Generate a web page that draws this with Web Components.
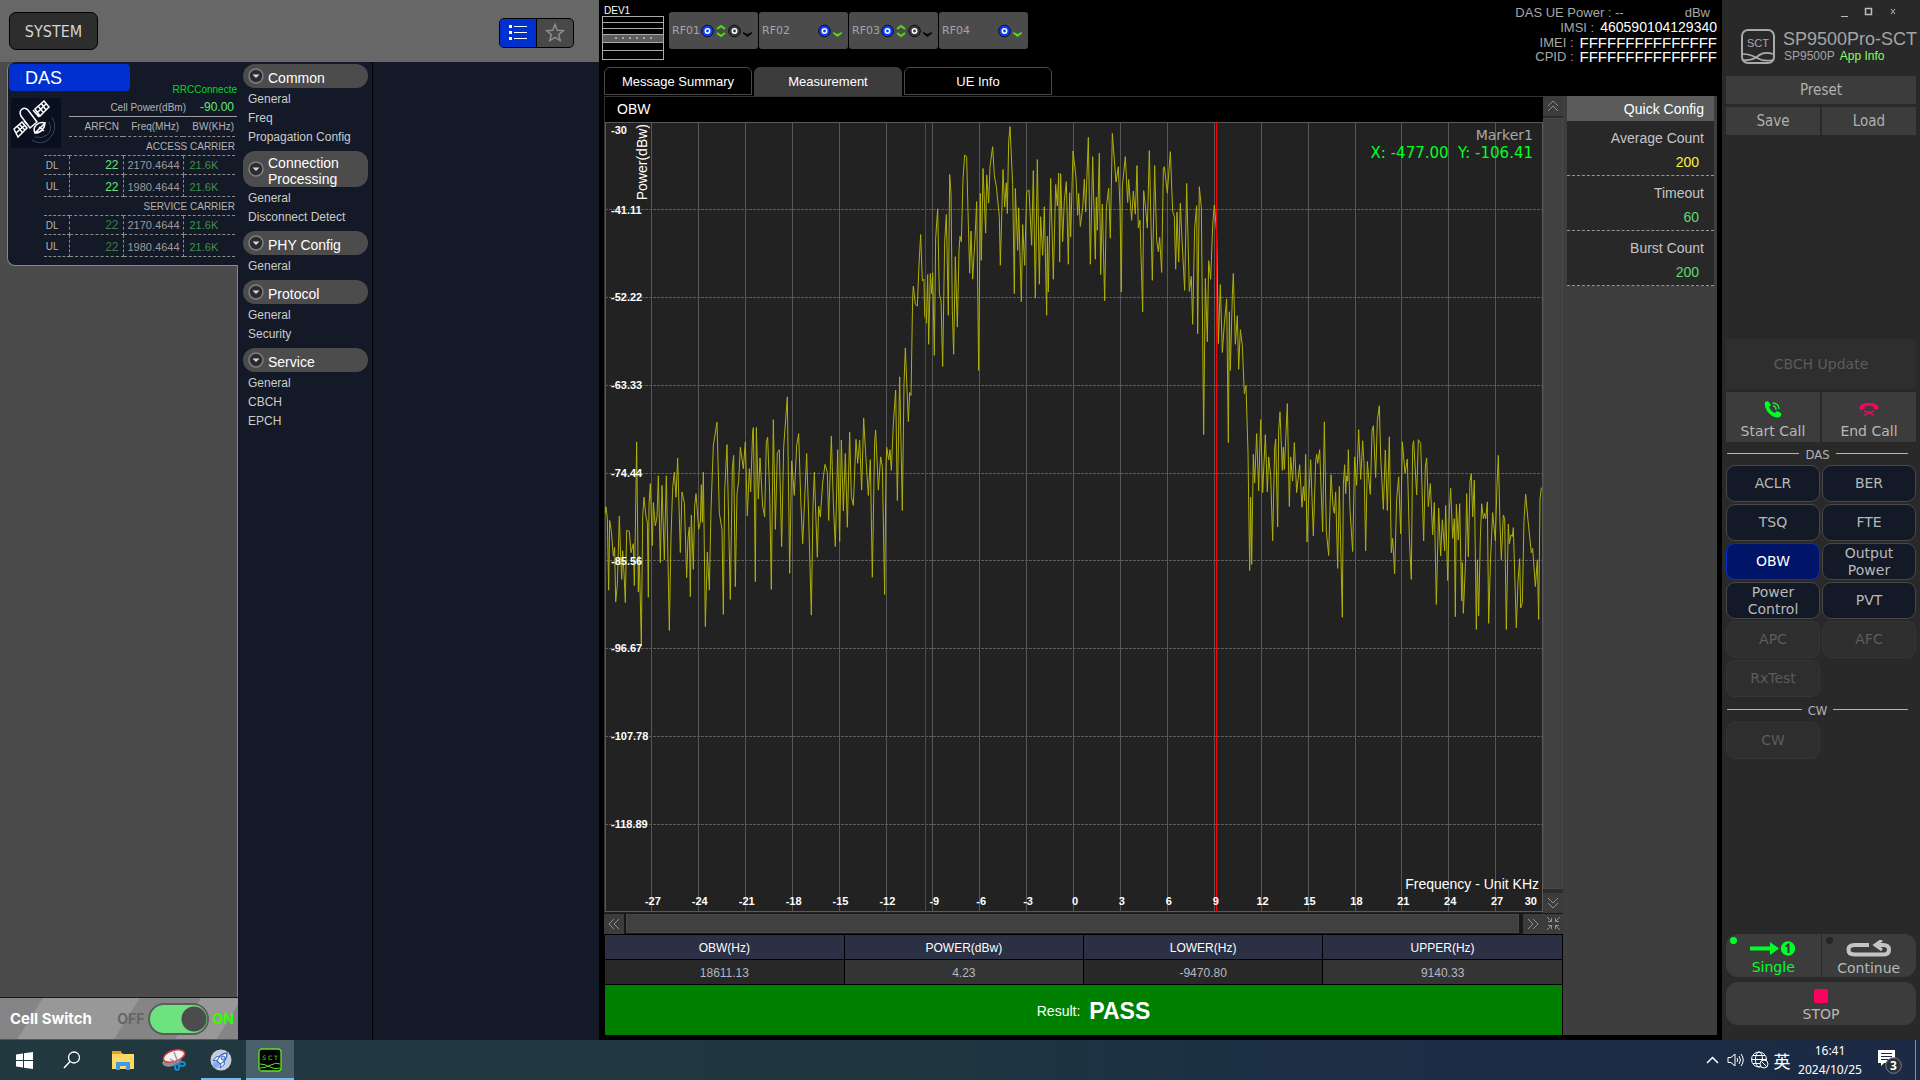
<!DOCTYPE html>
<html lang="en">
<head>
<meta charset="utf-8">
<title>SP9500Pro-SCT</title>
<style>
html,body{margin:0;height:100%;background:#000}
body{font-family:"Liberation Sans",Arial,sans-serif;font-size:14px;color:#ccc;--tahoma:"DejaVu Sans Condensed","DejaVu Sans",sans-serif;--verdana:"DejaVu Sans",sans-serif;--navy:#131926}
</style>
</head>
<body>
<sct-app></sct-app>
<script>
const define = (name, html, setup) => {
  const template = document.createElement('template');
  template.innerHTML = '<style>*{box-sizing:border-box}button,input{font:inherit;color:inherit;background:none;border:0;padding:0;margin:0}a{color:inherit;text-decoration:none}svg{display:block}</style>' + html;
  customElements.define(name, class extends HTMLElement {
    constructor() {
      super();
      this.attachShadow({ mode: 'open' }).append(template.content.cloneNode(true));
    }
    connectedCallback() { if (setup) setup(this, this.shadowRoot); }
  });
};

/* ---------- left side ---------- */
define('view-bar', `
<style>
:host{display:flex;align-items:center;justify-content:space-between;height:62px;padding:4px 25px 0 9px;background:#676767;flex:none}
.system{width:89px;height:38px;margin-bottom:4px;border:1px solid #000;border-radius:7px;background:#2d2d2d;color:#d4d4d4;font:16px var(--tahoma)}
.modes{display:flex;height:30px;width:75px;border:1px solid #000;border-radius:5px;overflow:hidden;background:#484848}
.modes button{flex:1;display:grid;place-items:center}
.modes button:first-child{background:#0030d0;border-right:1px solid #000}
</style>
<button class="system">SYSTEM</button>
<div class="modes">
<button aria-label="List view"><svg width="18" height="18" viewBox="0 0 18 18"><path d="M0 1h3v3H0zM0 7h3v3H0zM0 13h3v3H0zM5 2h13v1H5zM5 8h13v1H5zM5 14h13v1H5z" fill="#fff"/></svg></button>
<button aria-label="Favourites"><svg width="20" height="20" viewBox="0 0 20 20"><path d="M10 1.5l2.3 5.7 6.1.5-4.7 3.9 1.500 6-5.200-3.300-5.200 3.300 1.500-6L1.600 7.700l6.100-.5z" fill="none" stroke="#8c8c8c" stroke-width="1.500"/></svg></button>
</div>`);

define('cell-card', `
<style>
:host{display:block;margin-left:7px;background:var(--navy);border-left:1px solid #888;border-bottom:1px solid #888;border-radius:8px 0 0 8px;height:204px;font-size:10px;color:#b4b4b4;padding:2px 1px 0 0}
.top{display:flex;justify-content:space-between;height:52px}
.left{display:flex;flex-direction:column;width:122px}
h2{margin:0 0 0 1px;width:121px;height:27px;line-height:28px;padding-left:16px;border-radius:4px;background:#0030d0;color:#fff;font-size:18px;font-weight:400}
.state{margin-top:19px;line-height:14px;color:#00dc1e;white-space:nowrap}
.body{display:flex;flex-direction:column;align-items:flex-end;position:relative}
.pic{position:absolute;left:3px;top:-18px;width:50px;height:50px;background:#081020}
.power{display:flex;justify-content:flex-end;gap:14px;align-items:center;height:19px;margin-top:-18px;width:168px;padding-right:3px;border-bottom:1px solid #a0a0a0}
.power b{font-weight:400;font-size:12px;color:#66e87a}
table{border-collapse:collapse;table-layout:fixed;width:191px;margin-right:2px}
td,th{padding:1px 0 0;font-weight:400;height:19px;text-align:right}
tr.tall td{height:22px;padding-top:3px}
.ln th:not(:first-child),.ln td{border-bottom:1px dashed #8a8a8a}
.cap th{border-bottom:1px dashed #8a8a8a}
.ln td:not(:last-child){border-right:1px dashed #8a8a8a}
td:nth-child(1){text-align:center;padding-right:8px}
td:nth-child(2){font-size:12px;color:#66e87a;padding-right:4px}
td:nth-child(3){font-size:11px;color:#9b9b9b;padding-right:3px}
td:nth-child(4){font-size:11px;color:#3f9150;text-align:left;padding-left:6px}
.dim td:nth-child(2){color:#3f7a4c}
.ln th{padding-right:4px}.ln th:last-child{padding-right:1px}
</style>
<div class="top"><div class="left"><h2>DAS</h2></div><span class="state">RRCConnecte</span></div>
<div class="body">
<svg class="pic" viewBox="0 0 50 50"><g fill="none" stroke="#fff" stroke-width="1.500"><path d="M24 11l9-8 5 6-9 9zM27 8l5 6M30 5l5 7M26 15l9-9M3 31l8-7 5 6-9 9zM6 28l5 6M8 26l6 6M5 35l9-8M22 12l6 7M16 26l-3-3"/><path d="M10 18c-3-6 3-10 7-6l9 12-7 6z"/><path d="M24 35c-3-6 3-12 10-10zM24 35c6 0 10-5 10-10M28 29l5 4"/></g><g fill="none" stroke="#3a4358"><path d="M41 19q7 12-3 22-8 7-17 1M38 24q4 8-2 13-5 4-12 2"/></g></svg>
<div class="power">Cell Power(dBm) <b>-90.00</b></div>
<table>
<colgroup><col style="width:25px"><col style="width:54px"><col style="width:60px"><col></colgroup>
<tr class="ln"><th></th><th>ARFCN</th><th>Freq(MHz)</th><th>BW(KHz)</th></tr>
<tr class="cap"><th colspan="4">ACCESS CARRIER</th></tr>
<tr class="ln"><td>DL</td><td>22</td><td>2170.4644</td><td>21.6K</td></tr>
<tr class="ln tall"><td>UL</td><td>22</td><td>1980.4644</td><td>21.6K</td></tr>
<tr class="cap"><th colspan="4">SERVICE CARRIER</th></tr>
<tr class="ln dim"><td>DL</td><td>22</td><td>2170.4644</td><td>21.6K</td></tr>
<tr class="ln tall dim"><td>UL</td><td>22</td><td>1980.4644</td><td>21.6K</td></tr>
</table></div>`);

define('cell-switch', `
<style>
:host{display:flex;align-items:center;height:43px;padding:0 4px 0 10px;border-top:1px solid #131926;border-bottom:1px solid #555;font:700 14px Inter,sans-serif;color:#fff;background:linear-gradient(122deg,#858585 0 36px,#989898 37px 118px,#858585 119px 170px,#989898 171px 205px,#858585 206px)}
label{flex:1;white-space:nowrap;font-size:15px}
.off{color:#666;margin-right:3px}.on{color:#2dff00;margin-left:4px}
input{appearance:none;width:61px;height:32px;border:2px solid #5c5c5c;border-radius:16px;background:radial-gradient(circle at 44px 14px,#4c4c4c 12px,#6ee27e 13px)}
</style>
<label for="power">Cell Switch</label><span class="off">OFF</span><input id="power" type="checkbox" role="switch" checked><span class="on">ON</span>`);

define('menu-group', `
<style>
:host{display:block;margin-bottom:5px}
button{display:flex;align-items:center;gap:4px;width:125px;min-height:24px;padding:2px 0 2px 5px;border-radius:12px;background:#4c4c4c;color:#fff;font-size:14px;line-height:16px;text-align:left}
button span{padding-top:2px;margin-bottom:-2px}
svg{flex:none}
nav{display:flex;flex-direction:column;padding:2px 0 0 5px;margin-bottom:-1px}
::slotted(a){display:block;height:19px;line-height:19px;font-size:12px;color:#d6d6d6;text-decoration:none;white-space:nowrap}
</style>
<button><svg width="16" height="16" viewBox="0 0 16 16"><circle cx="8" cy="8" r="7" fill="#2c2c2f" stroke="#808080" stroke-width="1.500"/><path d="M4.500 6.500h7L8 10z" fill="#d8d8ec"/></svg><span></span></button>
<nav><slot></slot></nav>`, (el, root) => { root.querySelector('span').textContent = el.getAttribute('label'); });

/* ---------- header of the measuring area ---------- */
define('rf-port', `
<style>
:host{display:flex;align-items:center;width:89px;height:37px;padding:0 6px 0 3px;border-radius:3px;background:#4b4b4b;font:11px var(--verdana);color:#a4a4ae;justify-content:space-between}
div{display:flex;align-items:center;gap:2px}
:host([single]) .ud,:host([single]) .rx{display:none}
.tri{margin-top:7px}
</style>
<slot></slot><div>
<svg width="13" height="14" viewBox="0 0 13 14"><circle cx="6.500" cy="7" r="5.800" fill="#0b3cff" stroke="#0a0a1c"/><circle cx="6.500" cy="7" r="2.200" fill="none" stroke="#fff" stroke-width="1.500"/></svg>
<svg class="ud" width="10" height="14" viewBox="0 0 10 14"><path d="M1 5l4-3 4 3M1 9l4 3 4-3" fill="none" stroke="#4fe010" stroke-width="2"/></svg>
<svg class="rx" width="13" height="14" viewBox="0 0 13 14"><circle cx="6.500" cy="7" r="5.800" fill="#3a3a3a" stroke="#0a0a0a"/><circle cx="6.500" cy="7" r="2.200" fill="none" stroke="#fff" stroke-width="1.500"/></svg>
<svg class="tri" width="9" height="5" viewBox="0 0 9 5"><path d="M0 0l4.500 2L9 0v1.500L4.500 5 0 1.500z"/></svg></div>`,
(el, root) => root.querySelector('.tri').setAttribute('fill', el.hasAttribute('single') ? '#4fe010' : '#080808'));

define('device-bar', `
<style>
:host{display:flex;height:67px;flex:none}
.dev{width:63px;margin:6px 4px 0 -2px;font-size:10px;line-height:10px;color:#fff}
.dev span{padding-left:2px}
.ports{display:flex;gap:1px;margin-top:12px}
.info{margin-left:auto;padding-top:5px;color:#a8a8a8;font-size:13px}
.info div{display:flex;justify-content:flex-end;gap:6px;line-height:15px;height:15px}
.info b{font-weight:400;color:#fff;font-size:14px}
.info .f{font-size:15px}
.info .p{gap:61px;padding-right:7px}
.info div:last-child{margin-top:-1px}
</style>
<div class="dev"><span>DEV1</span><svg width="62" height="44" viewBox="0 0 62 44" shape-rendering="crispEdges"><path d="M0 18h62v8H0z" fill="#5c5c5c"/><path d="M.5.5h61v43H.5zM0 6.500h62M0 12.500h62M0 18.500h62M0 26.500h62M0 34.500h62" fill="none" stroke="#aaa"/><path d="M13 22h42" stroke="#a8a8a8" stroke-width="2" stroke-dasharray="2 5"/></svg></div>
<div class="ports"><rf-port>RF01</rf-port><rf-port single>RF02</rf-port><rf-port>RF03</rf-port><rf-port single>RF04</rf-port></div>
<div class="info"><div class="p"><span>DAS UE Power : --</span><span>dBw</span></div><div><span>IMSI :</span><b>460590104129340</b></div><div><span>IMEI :</span><b class="f">FFFFFFFFFFFFFFF</b></div><div><span>CPID :</span><b class="f">FFFFFFFFFFFFFFF</b></div></div>`);

define('page-tabs', `
<style>
:host{display:flex;gap:2px;height:29px;flex:none}
button{width:148px;height:28px;border:1px solid #4a4a4a;border-radius:6px 6px 0 0;color:#fff;font-size:13px}
[aria-selected=true]{height:29px;background:#3c3c3c;border-color:#3c3c3c}
</style>
<button role="tab">Message Summary</button><button role="tab" aria-selected="true">Measurement</button><button role="tab">UE Info</button>`);

/* ---------- spectrum ---------- */
/* x,y pairs in plot units; the upper half continues at x = 1350 */
const lowerHalf = '15,1130 18,1112 22,1145 26,1345 29,1150 34,1180 40,1250 44,1225 47,1378 52,1330 58,1138 62,1250 65,1315 68,1235 72,1297 76,1380 80,1178 88,1180 93,1240 100,1215 103,1332 106,1180 110,930 115,1350 118,1250 124,1500 128,1140 132,1085 138,1140 142,1155 145,1365 147,1105 151,1047 157,1220 160,1100 166,1165 171,1140 175,1025 181,1268 186,1052 193,1260 199,1025 208,1458 213,1195 218,1058 223,1015 228,1085 233,975 241,1240 246,1070 253,1100 260,1310 264,1200 268,1168 271,1363 274,1135 280,1287 284,1110 288,1075 296,1175 301,1155 304,1050 307,1155 310,1015 316,1447 322,1238 328,1345 333,1120 340,940 351,875 358,1130 366,1175 370,1413 374,1070 381,938 391,1371 397,1005 401,968 406,1335 411,1075 416,1040 421,945 430,1005 436,930 442,1137 448,1005 452,1070 458,900 460,890 464,1137 466,1321 469,890 475,1090 480,975 488,1110 494,1140 499,930 503,917 509,1075 514,1343 520,868 526,1175 532,960 538,952 545,1223 551,945 562,804 569,1298 575,983 583,1080 590,940 596,907 602,1085 608,1215 614,1090 620,963 626,1140 634,1415 639,1110 643,1015 648,1150 652,1253 656,1110 661,1140 668,1045 675,993 682,1015 686,1150 694,914 700,1100 706,1223 713,952 719,1209 724,925 730,1123 736,963 742,1169 749,903 754,1083 760,1108 768,923 773,990 779,925 785,1065 791,863 797,965 805,1080 811,980 817,1309 824,930 827,897 835,1065 842,972 847,1000 854,1357 858,1000 860,945 866,980 870,952 874,1010 880,880 887,785 892,1094 899,748 907,1122 912,770 916,667 925,873 929,792 933,800 938,525 940,494 946,545 952,550 957,435 962,350 967,480 972,475 974,577 979,598 983,462 986,657 991,459 995,515 998,457 1003,688 1007,360 1013,278 1018,515 1023,535 1028,719 1034,370 1039,294 1045,576 1049,182 1053,235 1057,565 1061,685 1066,412 1072,609 1077,395 1080,355 1084,370 1089,195 1094,127 1100,133 1104,285 1109,458 1113,340 1118,475 1125,360 1130,258 1136,730 1141,235 1144,422 1149,165 1157,346 1160,183 1166,262 1170,160 1178,104 1183,185 1189,215 1198,300 1201,436 1209,168 1214,273 1219,205 1222,291 1226,90 1230,48 1238,210 1243,515 1246,221 1253,394 1256,275 1264,538 1268,322 1274,436 1280,230 1287,225 1295,380 1300,171 1306,528 1312,140 1318,489 1322,300 1328,408 1333,272 1340,576 1342,355 1345,510 1352,193 1360,475 1367,210 1372,270 1376,178 1379,427 1382,180 1388,370 1393,255 1399,202 1405,433 1409,233 1412,357 1419,116 1428,190 1433,296 1436,235 1441,327 1448,275 1453,195 1457,287 1465,78 1471,433 1478,132 1486,419 1489,245 1492,338 1498,122';
const upperHalf = '152,462 157,265 164,535 169,275 176,220 181,360 187,67 198,203 205,160 210,275 214,510 217,215 226,132 233,260 236,196 245,310 250,228 256,293 261,157 265,332 270,310 278,567 281,227 286,270 292,332 298,115 303,320 307,478 314,157 320,365 325,398 329,358 335,456 340,165 343,160 352,234 361,118 368,285 373,300 377,447 381,287 386,427 391,262 396,365 404,506 410,207 418,509 424,467 428,601 434,330 440,269 443,627 448,216 454,275 461,910 466,473 472,650 476,423 482,475 488,325 493,267 500,345 505,655 511,490 517,680 523,600 530,530 535,932 538,566 541,730 547,520 550,459 556,657 562,577 566,727 571,616 577,660 583,795 588,773 594,960 599,1290 602,1085 605,1273 610,965 614,1045 620,907 626,1067 632,868 638,1072 646,910 652,1070 656,972 662,1025 668,1207 674,950 677,922 683,1168 686,900 690,846 697,1010 700,945 703,1007 712,823 718,1111 722,972 728,1040 733,932 740,1072 749,994 756,1113 760,1055 764,1095 767,965 771,1210 777,1070 782,980 790,1193 797,985 800,965 803,990 809,952 818,1182 823,874 829,1180 836,1248 843,1022 849,1110 853,1130 857,1070 863,1284 868,1055 877,1421 880,1050 884,994 887,1075 890,1025 893,1040 895,952 900,1120 908,1237 914,972 920,1052 926,896 932,1035 938,927 942,990 947,1235 952,985 958,1050 961,1077 966,900 970,885 977,1030 982,870 988,829 992,970 1000,1119 1006,953 1012,1122 1018,916 1024,1240 1028,1200 1034,1299 1040,1090 1046,1028 1052,1187 1057,930 1065,1018 1072,978 1078,1200 1084,1315 1088,940 1091,927 1100,1078 1105,924 1112,935 1121,1207 1126,1000 1130,975 1135,1111 1141,1047 1148,1190 1153,1100 1159,1385 1166,1115 1172,1249 1177,1148 1184,1235 1187,1108 1193,1318 1198,1120 1202,1060 1208,1200 1213,1145 1216,1419 1219,1105 1225,1205 1229,1103 1235,1375 1237,1268 1240,1410 1246,1280 1250,1075 1255,1252 1260,1040 1264,1019 1268,1140 1273,1037 1279,1455 1282,1260 1286,1417 1291,1200 1295,1103 1300,1145 1304,1130 1307,1145 1312,1098 1316,1438 1322,1250 1328,1128 1336,1207 1341,1050 1345,968 1350,1160 1354,1260 1360,1135 1364,1145 1369,1455 1375,1160 1378,1215 1383,1190 1387,1195 1390,1170 1399,1450 1404,1320 1409,1257 1412,1395 1417,1380 1422,1150 1427,1076 1434,1150 1444,1240 1448,1228 1456,1335 1462,1260 1466,1427 1470,1090 1474,1058';

define('spectrum-chart', `
<style>
:host{display:block;position:relative;background:#222;min-height:300px;flex:1}
svg{position:absolute;inset:0;width:100%;height:100%}
path,polyline{fill:none;vector-effect:non-scaling-stroke}
.x,.y{position:absolute;font:700 11px/12px "Liberation Sans",Arial,sans-serif;color:#fff}
.x{bottom:6px;transform:translateX(-50%);margin-left:1px}
.x.last{transform:none;right:6px}
.y{left:6px;transform:translateY(-50%)}
.power{position:absolute;left:29px;top:2px;writing-mode:vertical-rl;rotate:180deg;color:#fff;line-height:16px}
.unit{position:absolute;right:4px;bottom:21px;color:#fff;line-height:16px}
.marker{position:absolute;right:10px;top:4px;text-align:right;font:14px/18px var(--verdana);color:#a8a8a8}
.marker p{margin:0;font-size:15px;color:#00ff22;white-space:pre}
</style>
<svg viewBox="15 35 2814 2212" preserveAspectRatio="none">
<g shape-rendering="crispEdges"><path id="v" stroke="#565656"/><path id="h" stroke="#5c5c5c" stroke-dasharray="3 1"/><path d="M15 36H2829M16 35V2247M2827 35V2247M15 2245H2829" stroke="#5a5a5a"/></g>
<polyline id="t" stroke="#b0b00a" stroke-width="1" stroke-linejoin="bevel"/>
<path d="M976 35V2247M1849 35V2247" stroke="#f00" shape-rendering="crispEdges"/>
</svg>
<span class="power">Power(dBw)</span>
<div class="marker">Marker1<p>X: -477.00  Y: -106.41</p></div>
<span class="unit">Frequency - Unit KHz</span>`, (el, root) => {
  let v = '', h = '';
  const label = (cls, text, style) => {
    const s = document.createElement('span');
    s.className = cls; s.textContent = text; s.style.cssText = style; root.append(s);
  };
  for (let i = 1; i < 20; i++) {
    v += `M${14 + 140.7 * i} 35V2247`;
    label('x', -30 + 3 * i, `left:${i * 5}%`);
  }
  label('x last', '30', '');
  label('y', '-30', 'top:8px');
  ['-41.11', '-52.22', '-63.33', '-74.44', '-85.56', '-96.67', '-107.78', '-118.89'].forEach((t, i) => {
    h += `M15 ${35 + 245.6 * (i + 1)}H2829`;
    label('y', t, `top:${(i + 1) * 11.1}%`);
  });
  root.getElementById('v').setAttribute('d', v);
  root.getElementById('h').setAttribute('d', h);
  const rest = upperHalf.split(' ').map(p => { const [x, y] = p.split(','); return (+x + 1350) + ',' + y; }).join(' ');
  root.getElementById('t').setAttribute('points', lowerHalf + ' ' + rest);
});

define('result-table', `
<style>
:host{display:block;background:#000;padding:0 1px}
table{width:100%;border-collapse:collapse;table-layout:fixed;font-size:12px}
th,td{height:25px;padding:2px 0 0;text-align:center;font-weight:400;border:1px solid #000;border-width:0 1px 1px 0}
th:last-child,td:last-child{border-right:0}
th{background:#2b3044;color:#fff}
td{background:#282828;color:#b4b8c0}td:nth-child(even){background:#343434}
.pass{display:flex;align-items:center;justify-content:center;gap:9px;height:50px;padding:2px 0 0 20px;background:#008000;color:#fff}
.pass b{font-size:23px}
</style>
<table><tr><th>OBW(Hz)</th><th>POWER(dBw)</th><th>LOWER(Hz)</th><th>UPPER(Hz)</th></tr><tr><td>18611.13</td><td>4.23</td><td>-9470.80</td><td>9140.33</td></tr></table>
<div class="pass"><span>Result:</span><b>PASS</b></div>`);

define('obw-panel', `
<style>
:host{display:flex;flex-direction:column;flex:1;min-width:0}
.upper{flex:1;display:flex;min-height:0}
.plot{flex:1;display:flex;flex-direction:column;min-width:0;border:1px solid #333;border-width:1px 0 0 1px}
h3{margin:0;height:25px;line-height:25px;padding-left:12px;font-size:14px;font-weight:400;color:#fff;flex:none}
.vs{width:20px;display:flex;flex-direction:column;background:#2c2c2c;gap:2px}
.hs{display:flex;height:22px;padding:1px 0;gap:2px;background:#181818;border-bottom:1px solid #000}
button{width:20px;height:20px;display:grid;place-items:center;background:#3c3c3c;flex:none}
.thumb{flex:1;background:#404040;border:1px solid #484848}
.vs .thumb{margin-bottom:2px}.hs .thumb{margin-right:2px}
.fit{margin-left:-2px}
button svg{fill:none;stroke:#909090}
</style>
<div class="upper"><div class="plot"><h3>OBW</h3><spectrum-chart></spectrum-chart></div>
<div class="vs"><button aria-label="Scroll up"><svg width="12" height="12"><path d="M1 6l5-5 5 5M1 11l5-5 5 5"/></svg></button><div class="thumb"></div><button aria-label="Scroll down"><svg width="12" height="12"><path d="M1 1l5 5 5-5M1 6l5 5 5-5"/></svg></button></div></div>
<div class="hs"><button aria-label="Scroll left"><svg width="12" height="12"><path d="M6 1L1 6l5 5M11 1L6 6l5 5"/></svg></button><div class="thumb"></div><button aria-label="Scroll right"><svg width="12" height="12"><path d="M1 1l5 5-5 5M6 1l5 5-5 5"/></svg></button><button class="fit" aria-label="Fit"><svg width="13" height="13"><path d="M0 0l5 5M1 4.500h3.500V1M13 0L8 5M12 4.500H8.500V1M0 13l5-5M1 8.500h3.500V12M13 13L8 8M12 8.500H8.500V12"/></svg></button></div>
<result-table></result-table>`);

define('quick-config', `
<style>
:host{display:block;width:154px;padding:0 3px 0 4px;background:#3e3e3e;flex:none}
h3{margin:0;height:25px;line-height:26px;padding-right:10px;background:#5b5b5b;color:#fff;font-size:14px;font-weight:400;text-align:right}
div{height:55px;padding:8px 10px 0 0;background:#282828;border-bottom:1px dashed #969696;text-align:right;line-height:18px;color:#c4c4c8}
label{display:block}
input{display:block;width:100%;height:18px;margin-top:6px;padding-right:5px;text-align:right;color:#5fd873}
.edit input{color:#ffef3c}
</style>
<h3>Quick Config</h3>
<div class="edit"><label for="a">Average Count</label><input id="a" value="200"></div>
<div><label for="t">Timeout</label><input id="t" value="60"></div>
<div><label for="b">Burst Count</label><input id="b" value="200"></div>`);

/* ---------- right side ---------- */
define('sct-button', `
<style>
:host{display:block;height:37px}
button{display:flex;flex-direction:column;align-items:center;justify-content:center;gap:5px;width:100%;height:100%;font:14px/17px var(--verdana);color:#b8b8b8;border:1px solid #484848;border-radius:9px;background:var(--navy)}
:host([kind=flat]) button{border:0;border-radius:0;background:#3c3c3c}
:host([kind=call]) button{border:0;border-radius:0;background:#3c3c3c;padding-top:7px}
:host([kind=plain]) button{border:0;border-radius:0;background:#3c3c3c;font:15px var(--tahoma);color:#b0b0b0}
:host([kind=run]) button{border:0;border-radius:var(--r,12px);background:#3c3c3c;padding-top:5px;gap:3px}
:host([on]) button{background:#001468;border-color:#0030d0;color:#fff}
:host([off]) button{background:#2e2e2e;border-color:#363636;color:#5c5c5c}
</style>
<button><slot></slot></button>`, (el, root) => { if (el.hasAttribute('off')) root.querySelector('button').disabled = true; });

define('group-rule', `
<style>
:host{display:flex;align-items:center;gap:6px;height:23px;padding:2px 8px 0 1px;font:13px var(--tahoma);color:#b4b4b4}
:host::before,:host::after{content:"";flex:1;height:1px;background:#b4b4b4;margin-bottom:3px}
</style><slot></slot>`);

define('control-side', `
<style>
:host{display:flex;flex-direction:column;width:198px;margin-left:5px;padding:0 4px 15px;background:#292929;flex:none}
.win{display:flex;justify-content:flex-end;gap:12px;height:24px;padding-right:17px;align-items:center}
.win button{width:12px;height:12px}
.brand{display:flex;height:52px;padding:5px 0 0 15px;color:#a4a4a4}
.brand h1{margin:0;font-size:18px;line-height:20px;font-weight:400;white-space:nowrap}
.brand div div{font-size:12px;line-height:14px;display:flex;gap:5px;padding-left:1px}
.brand svg{margin-right:8px;flex:none}
.brand a{color:#86ff64}
.grid{display:grid;grid-template-columns:1fr 1fr;gap:2px}
.p{height:28px}.call{height:50px}
.preset{margin-bottom:3px}.update{margin:204px 0 3px}
.led{position:absolute;left:4px;top:3px;width:7px;height:7px;border-radius:50%;background:#00ff28}
.led.dark{background:#252525}
.run{margin-top:auto;display:grid;grid-template-columns:1fr 1fr;column-gap:1px;row-gap:5px}
.run sct-button{height:43px;position:relative}
.run .stop{grid-column:1/3}
.green{color:#00ff28}
</style>
<div class="win"><button aria-label="Minimise"><svg width="12" height="12"><path d="M2 10.500h7" stroke="#bbb"/></svg></button><button aria-label="Maximise"><svg width="12" height="12"><path d="M2.500 2.500h6v6h-6z" fill="none" stroke="#bbb" stroke-width="1.500"/></svg></button><button aria-label="Close"><svg width="12" height="12"><path d="M4 3l4 5M8 3L4 8" stroke="#bbb"/></svg></button></div>
<div class="brand"><svg width="34" height="35" viewBox="0 0 34 35"><g fill="none" stroke="#aaa" stroke-width="2"><rect x="1" y="1" width="32" height="33" rx="6"/><path d="M2 25q7 0 14 4t16 2M2 31q9 1 15-4t15-2" stroke-width="1.700"/></g><text x="17" y="18" text-anchor="middle" font-family="Liberation Sans" font-size="11" fill="#aaa">SCT</text></svg><div><h1>SP9500Pro-SCT</h1><div><span>SP9500P</span><a href="#info">App Info</a></div></div></div>
<sct-button class="p preset" kind="plain">Preset</sct-button>
<div class="grid"><sct-button class="p" kind="plain">Save</sct-button><sct-button class="p" kind="plain">Load</sct-button></div>
<sct-button class="call update" kind="flat" off>CBCH Update</sct-button>
<div class="grid"><sct-button class="call" kind="call"><svg width="18" height="17" viewBox="0 0 18 17"><path d="M1 1l3-1 3 4-2 2q2 5 6 6l2-2 4 2q1 2-1 4Q9 18 3 10 0 5 1 1z" fill="#00ff28"/><path d="M9 5q3 0 3 4M8.500 2q6 0 6.500 6" fill="none" stroke="#00ff28" stroke-width="1.300"/></svg>Start Call</sct-button><sct-button class="call" kind="call"><svg width="20" height="17" viewBox="0 0 20 17"><path d="M.5 6Q2 2 10 2t9.500 4q.5 2-1 3l-4-1.200V5.500Q10 4 5.500 5.500v2.300L1.500 9Q0 8 .5 6z" fill="#ff0060"/><path d="M5 10q5 1 10 4.500M15 10q-5 1-10 4.500" fill="none" stroke="#ff0060" stroke-width="1.500"/></svg>End Call</sct-button></div>
<group-rule>DAS</group-rule>
<div class="grid"><sct-button>ACLR</sct-button><sct-button>BER</sct-button><sct-button>TSQ</sct-button><sct-button>FTE</sct-button><sct-button on>OBW</sct-button><sct-button>Output<br>Power</sct-button><sct-button>Power<br>Control</sct-button><sct-button>PVT</sct-button><sct-button off>APC</sct-button><sct-button off>AFC</sct-button><sct-button off>RxTest</sct-button></div>
<group-rule style="height:25px">CW</group-rule>
<div class="grid"><sct-button off>CW</sct-button></div>
<div class="run">
<sct-button kind="run" style="--r:12px 0 0 12px"><i class="led"></i><svg width="46" height="15" viewBox="0 0 46 15"><path d="M0 5.500h20V1l9 6.500-9 6.500V9.500H0z" fill="#00ff28"/><circle cx="38" cy="7.500" r="7.200" fill="#00ff28"/><path d="M35.500 5.500l3-2v8.500" fill="none" stroke="#333" stroke-width="2"/></svg><span class="green">Single</span></sct-button>
<sct-button kind="run" style="--r:0 12px 12px 0"><i class="led dark"></i><svg width="46" height="17" viewBox="0 0 46 17"><path d="M23 5H8.500q-6 0-6 4.700t6 4.800H37q6 0 6-4.800T37 5h-6" fill="none" stroke="#c4c4c4" stroke-width="4"/><path d="M36 0l-7 5 7 5" fill="none" stroke="#c4c4c4" stroke-width="3"/></svg>Continue</sct-button>
<sct-button class="stop" kind="run"><svg width="14" height="14"><rect width="14" height="14" rx="2" fill="#ff0060"/></svg>STOP</sct-button>
</div>`);

/* ---------- desktop task bar ---------- */
define('task-bar', `
<style>
:host{display:flex;height:40px;flex:none;background:linear-gradient(90deg,#22383f,#20373f 45%,#1b2f44 65%,#1c2a45);color:#fff;font:12px "Noto Sans",sans-serif}
button{width:48px;height:40px;display:grid;place-items:center;flex:none}
.files{width:54px}
.run{box-shadow:inset 0 -2px #76b9ed}
.open{width:40px;margin:0 5px 0 3px}
.here{background:#4a6068}
.tray{margin-left:auto;display:flex;align-items:center;height:40px}
.tray button{width:24px}
.tray .ime{width:20px;font-family:"Noto Sans CJK SC",sans-serif;font-size:17px}
.clock{width:76px;text-align:center;line-height:19px;white-space:nowrap}
.tray .note{width:48px;padding:2px 6px 0 0;border-right:1px solid #8791a1;margin-right:4px}
</style>
<button aria-label="Start"><svg width="17" height="17" viewBox="0 0 17 17"><path d="M0 2.500L7 1.500V8H0zM8 1.300L17 0v8H8zM0 9h7v6.500L0 14.500zM8 9h9v8l-9-1.300z" fill="#fff"/></svg></button>
<button aria-label="Search"><svg width="18" height="18" viewBox="0 0 18 18"><circle cx="11" cy="6.500" r="5.500" fill="none" stroke="#fff" stroke-width="1.300"/><path d="M7 10.500L1 17" stroke="#fff" stroke-width="1.500"/></svg></button>
<button class="files" aria-label="Files"><svg width="22" height="19" viewBox="0 0 22 19"><path d="M0 1h9l1.500 2H22v15H0z" fill="#ffd766"/><path d="M0 0h9v3H0z" fill="#e8a317"/><path d="M4 19v-8h14v8h-4v-4H8v4z" fill="#3c9be6"/></svg></button>
<button aria-label="Snipping Tool"><svg width="24" height="22" viewBox="0 0 24 22"><ellipse cx="10" cy="12" rx="10" ry="5" fill="#8c9196" transform="rotate(-18 10 12)"/><ellipse cx="12" cy="7" rx="11" ry="5.500" fill="#f2f2f2" stroke="#dc3b3b" stroke-width="1.500" transform="rotate(-18 12 7)"/><path d="M12 3l5 13M8 10l7 4" stroke="#8d949b" stroke-width="1.300"/><g fill="none" stroke="#1d87d0" stroke-width="2"><ellipse cx="15" cy="18" rx="2" ry="3"/><ellipse cx="20" cy="15" rx="3" ry="2"/></g></svg></button>
<button class="run open" aria-label="Launcher"><svg width="22" height="22" viewBox="0 0 22 22"><circle cx="11" cy="11" r="10.500" fill="#c5ced9"/><path d="M7 12q2-7 10-8 0 8-7 11z" fill="#fff" stroke="#3568c0" stroke-width="1.300"/><circle cx="13" cy="9" r="2" fill="#b4d2ff" stroke="#3568c0"/><path d="M7 11l-4 1 3-4 3-.5M11 15l-1 4 4-3 .5-3" fill="#fff" stroke="#3568c0"/><circle cx="6" cy="16" r="3" fill="#7daef2"/></svg></button>
<button class="run here" aria-label="SCT"><svg width="24" height="24" viewBox="0 0 24 24"><rect x="1" y="1" width="22" height="22" rx="3" fill="#000" stroke="#5ae622" stroke-width="1.300"/><text x="12" y="12" text-anchor="middle" font-family="DejaVu Sans" font-size="6" fill="#5ae622">S C T</text><path d="M2 16q5 0 10 3t10 1M2 20q6 0 11-3t9-1" fill="none" stroke="#5ae622"/></svg></button>
<div class="tray">
<button aria-label="More"><svg width="13" height="8"><path d="M1 7l5.500-5.500L12 7" fill="none" stroke="#fff" stroke-width="1.500"/></svg></button>
<button aria-label="Sound"><svg width="18" height="16" viewBox="0 0 18 16"><path d="M1 5.500h3L8 2v12l-4-3.500H1z" fill="none" stroke="#fff"/><path d="M10 6q1.500 2 0 4M12 4q3 4 0 8M14 2q4.500 6 0 12" fill="none" stroke="#fff"/></svg></button>
<button aria-label="Network"><svg width="18" height="18" viewBox="0 0 18 18" fill="none" stroke="#fff"><circle cx="8" cy="8.500" r="7.500"/><ellipse cx="8" cy="8.500" rx="3.500" ry="7.500"/><path d="M.5 8.500h15M2 4.500h12M2 12.500h12"/><circle cx="13" cy="13" r="4" fill="#1c2a45"/><path d="M10.500 10.500l5 5"/></svg></button>
<button class="ime">英</button>
<div class="clock">16:41<br>2024/10/25</div>
<button class="note" aria-label="Notifications"><svg width="26" height="28" viewBox="0 0 26 28"><path d="M2 3h17v13H8l-3 3v-3H2z" fill="#fff"/><path d="M5 6.500h11M5 9.500h11M5 12.500h7" stroke="#1c2a45"/><circle cx="17.500" cy="18.500" r="7.800" fill="#2a2f38" stroke="#777e88"/><text x="17.500" y="22.500" text-anchor="middle" font-family="Noto Sans" font-weight="700" font-size="12" fill="#fff">3</text></svg></button>
</div>`);

define('sct-app', `
<style>
:host{display:flex;flex-direction:column;min-height:100vh}
.work{flex:1;display:flex;min-height:0}
.left{width:599px;display:flex;flex-direction:column;flex:none}
.cols{flex:1;display:flex;background:#4b4b4b}
.cells{width:238px;display:flex;flex-direction:column;flex:none}
.fill{flex:1;border-right:1px solid #888}
.menu{width:135px;padding:2px 0 0 5px;background:var(--navy);border-right:1px solid #000}
.detail{flex:1;background:var(--navy)}
main{flex:1;display:flex;flex-direction:column;min-width:0;padding:0 0 5px 5px;background:#000}
.page{flex:1;display:flex;min-height:0}
</style>
<div class="work">
<div class="left"><view-bar></view-bar>
<div class="cols"><div class="cells"><cell-card></cell-card><div class="fill"></div><cell-switch></cell-switch></div>
<div class="menu">
<menu-group label="Common"><a href="#c1">General</a><a href="#c2">Freq</a><a href="#c3">Propagation Config</a></menu-group>
<menu-group label="Connection Processing"><a href="#n1">General</a><a href="#n2">Disconnect Detect</a></menu-group>
<menu-group label="PHY Config"><a href="#p1">General</a></menu-group>
<menu-group label="Protocol"><a href="#r1">General</a><a href="#r2">Security</a></menu-group>
<menu-group label="Service"><a href="#s1">General</a><a href="#s2">CBCH</a><a href="#s3">EPCH</a></menu-group>
</div><div class="detail"></div></div></div>
<main><device-bar></device-bar><page-tabs></page-tabs><div class="page"><obw-panel></obw-panel><quick-config></quick-config></div></main>
<control-side></control-side>
</div>
<task-bar></task-bar>`);
</script>
</body>
</html>
